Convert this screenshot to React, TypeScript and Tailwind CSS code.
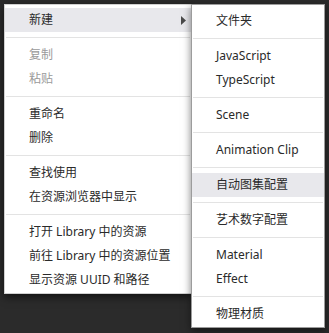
import React from "react";

type Entry = { label: string; disabled?: boolean; active?: boolean; sub?: boolean } | "sep";

const mainMenu: Entry[] = [
  { label: "新建", active: true, sub: true },
  "sep",
  { label: "复制", disabled: true },
  { label: "粘贴", disabled: true },
  "sep",
  { label: "重命名" },
  { label: "删除" },
  "sep",
  { label: "查找使用" },
  { label: "在资源浏览器中显示" },
  "sep",
  { label: "打开 Library 中的资源" },
  { label: "前往 Library 中的资源位置" },
  { label: "显示资源 UUID 和路径" },
];

const subMenu: Entry[] = [
  { label: "文件夹" },
  "sep",
  { label: "JavaScript" },
  { label: "TypeScript" },
  "sep",
  { label: "Scene" },
  "sep",
  { label: "Animation Clip" },
  "sep",
  { label: "自动图集配置", active: true },
  "sep",
  { label: "艺术数字配置" },
  "sep",
  { label: "Material" },
  { label: "Effect" },
  "sep",
  { label: "物理材质" },
];

function MenuItems({ items }: { items: Entry[] }) {
  return (
    <>
      {items.map((item, i) =>
        item === "sep" ? (
          <div key={i} className="mx-px my-[5px] h-px bg-[#e3e3e3]" />
        ) : (
          <div
            key={i}
            className={`flex h-6 items-center justify-between pl-6 pr-[5px] ${
              item.active ? "bg-[#e8e8ec]" : ""
            } ${item.disabled ? "text-[#9a9a9a]" : "text-[#2a2a2a]"}`}
          >
            <span className="whitespace-nowrap">{item.label}</span>
            {item.sub && (
              <svg width="5" height="9" viewBox="0 0 5 9">
                <polygon points="0,0 5,4.5 0,9" fill="#4a4a4a" />
              </svg>
            )}
          </div>
        )
      )}
    </>
  );
}

export default function App() {
  return (
    <div
      className="flex h-[333px] w-[329px] items-start bg-[#2b2b2b] pl-1 pt-1 text-[12px] leading-none"
      style={{ fontFamily: '"Noto Sans", "Noto Sans CJK SC", sans-serif' }}
    >
      {/* main context menu */}
      <div className="w-[188px] border border-[#d0d0d0] bg-white pb-px pt-[3px] shadow-[0_3px_8px_rgba(0,0,0,0.6)]">
        <MenuItems items={mainMenu} />
      </div>

      {/* submenu */}
      <div className="relative z-10 -ml-px w-[134px] border border-[#9c9c9c] bg-white pb-px pt-1 shadow-[0_3px_8px_rgba(0,0,0,0.5)]">
        <MenuItems items={subMenu} />
      </div>
    </div>
  );
}
